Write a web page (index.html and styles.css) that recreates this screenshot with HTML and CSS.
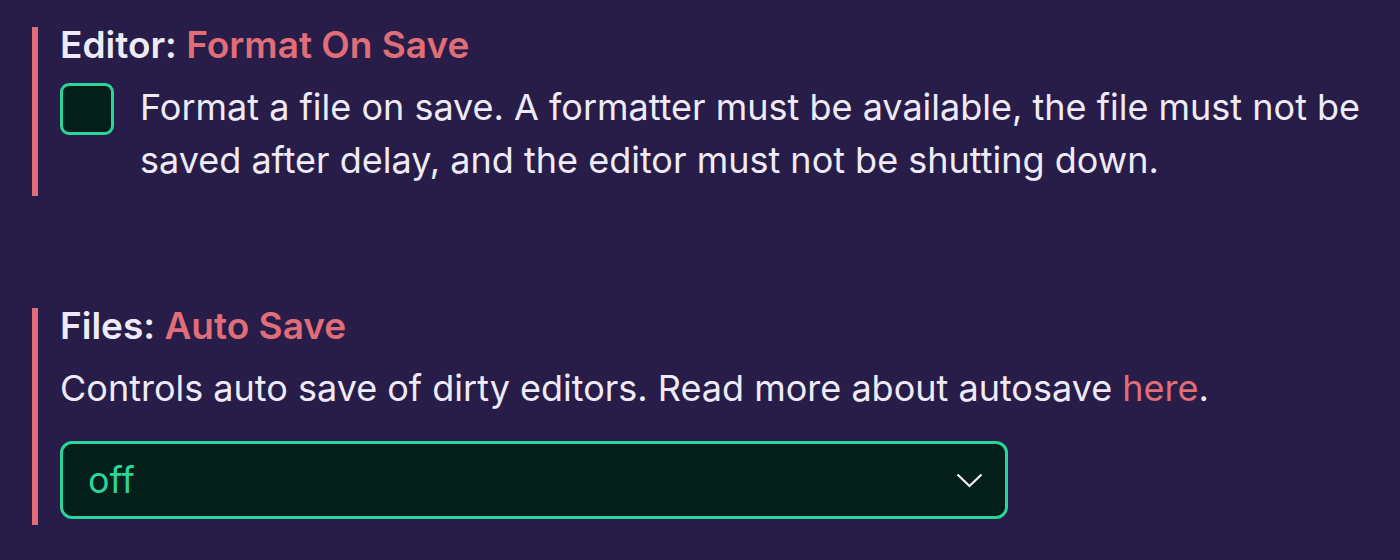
FILE: index.html
```html
<!DOCTYPE html>
<html>
<head>
<meta charset="utf-8">
<link rel="stylesheet" href="styles.css">
</head>
<body>
<div class="page">
  <section class="setting">
    <div class="title">Editor: <span class="name">Format On Save</span></div>
    <div class="check-row">
      <span class="checkbox"></span>
      <div class="desc">Format a file on save. A formatter must be available, the file must not be saved after delay, and the editor must not be shutting down.</div>
    </div>
  </section>
  <section class="setting second">
    <div class="title">Files: <span class="name">Auto Save</span></div>
    <div class="desc">Controls auto save of dirty editors. Read more about autosave <a class="link">here</a>.</div>
    <div class="select">
      <span class="value">off</span>
      <svg class="chev" width="27" height="15" viewBox="0 0 27 15"><path d="M1.5 1.5 L13.5 13 L25.5 1.5" fill="none" stroke="#f2eef8" stroke-width="2.2"/></svg>
    </div>
  </section>
</div>
</body>
</html>
```
FILE: styles.css
```css
html, body {
  margin: 0;
  padding: 0;
  background: #281d48;
}
.page {
  padding: 27px 0 0 32px;
  font-family: Inter, "Noto Sans", sans-serif;
  color: #efebf6;
  font-size: 36px;
  line-height: 53px;
}
.setting {
  border-left: 6px solid #e06d78;
  padding-left: 22px;
  padding-bottom: 9px;
  width: 1350px;
  box-sizing: border-box;
}
.second {
  margin-top: 112px;
  padding-bottom: 6px;
}
.title {
  font-size: 37px;
  font-weight: 600;
  line-height: 36px;
}
.name { color: #e06d78; }
.check-row {
  display: flex;
  align-items: flex-start;
  gap: 26px;
  margin-top: 18px;
}
.checkbox {
  flex: none;
  width: 54px;
  height: 52px;
  margin-top: 2px;
  box-sizing: border-box;
  border: 3px solid #2ad59a;
  border-radius: 9px;
  background: #051f1a;
}
.second .desc { margin-top: 18px; }
.link { color: #e06d78; }
.select {
  margin-top: 26px;
  width: 948px;
  height: 78px;
  box-sizing: border-box;
  border: 3px solid #2ad59a;
  border-radius: 12px;
  background: #051f1a;
  display: flex;
  align-items: center;
  justify-content: space-between;
  padding: 0 22px 0 25px;
  color: #2ad59a;
}
.chev { display: block; }
```
